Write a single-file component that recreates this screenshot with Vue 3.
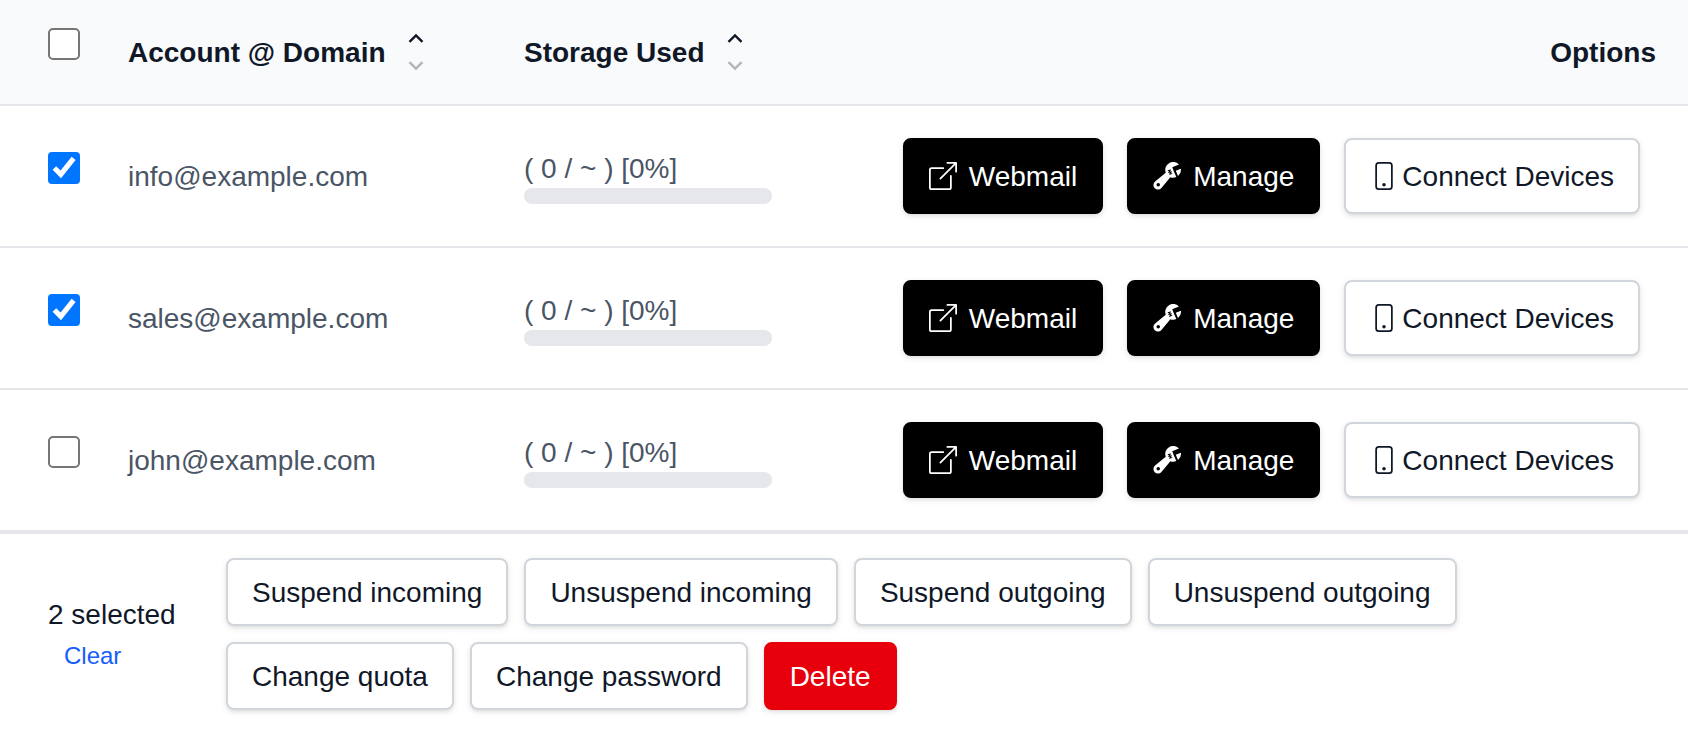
<script setup>
import { computed, ref } from 'vue'

const accounts = ref([
  { email: 'info@example.com', used: 0, quota: '~', percent: 0 },
  { email: 'sales@example.com', used: 0, quota: '~', percent: 0 },
  { email: 'john@example.com', used: 0, quota: '~', percent: 0 },
])

const bulkActions = [
  'Suspend incoming',
  'Unsuspend incoming',
  'Suspend outgoing',
  'Unsuspend outgoing',
  'Change quota',
  'Change password',
]

const columns = [
  { key: 'email', label: 'Account @ Domain' },
  { key: 'used', label: 'Storage Used' },
]

const selected = ref(['info@example.com', 'sales@example.com'])
const sortKey = ref('')
const sortDir = ref(1)

const allSelected = computed({
  get: () => accounts.value.length > 0 && selected.value.length === accounts.value.length,
  set: (on) => (selected.value = on ? accounts.value.map(a => a.email) : []),
})

const rows = computed(() => {
  const key = sortKey.value
  if (!key) return accounts.value
  return [...accounts.value].sort((a, b) => (a[key] > b[key] ? 1 : a[key] < b[key] ? -1 : 0) * sortDir.value)
})

function setSort(key) {
  if (sortKey.value === key) {
    sortDir.value = -sortDir.value
  } else {
    sortKey.value = key
    sortDir.value = 1
  }
}

function removeSelected() {
  accounts.value = accounts.value.filter(a => !selected.value.includes(a.email))
  selected.value = []
}
</script>

<template>
  <div class="accounts">
    <table class="table">
      <thead>
        <tr>
          <th class="col-check">
            <input v-model="allSelected" class="check" type="checkbox" aria-label="Select all accounts" />
          </th>
          <th v-for="c in columns" :key="c.key" :class="'col-' + c.key">
            <button class="sort" type="button" @click="setSort(c.key)">
              {{ c.label }}
              <span class="sort-icons">
                <svg viewBox="0 0 24 24"><path d="M5.5 14.9 12 8.4l6.5 6.5" /></svg>
                <svg class="dim" viewBox="0 0 24 24"><path d="M5.5 9.1 12 15.6l6.5-6.5" /></svg>
              </span>
            </button>
          </th>
          <th class="col-options">Options</th>
        </tr>
      </thead>
      <tbody>
        <tr v-for="a in rows" :key="a.email">
          <td class="col-check">
            <input v-model="selected" class="check" type="checkbox" :value="a.email" :aria-label="'Select ' + a.email" />
          </td>
          <td>{{ a.email }}</td>
          <td>
            <div class="usage">( {{ a.used }} / {{ a.quota }} ) [{{ a.percent }}%]</div>
            <div class="bar"><div class="bar-fill" :style="{ width: a.percent + '%' }"></div></div>
          </td>
          <td class="col-options">
            <div class="options">
              <a class="btn btn-dark" href="#webmail">
                <svg class="icon" viewBox="0 0 16 16">
                  <path d="M8.636 3.5a.5.5 0 0 0-.5-.5H1.5A1.5 1.5 0 0 0 0 4.5v10A1.5 1.5 0 0 0 1.5 16h10a1.5 1.5 0 0 0 1.5-1.5V7.864a.5.5 0 0 0-1 0V14.5a.5.5 0 0 1-.5.5h-10a.5.5 0 0 1-.5-.5v-10a.5.5 0 0 1 .5-.5h6.636a.5.5 0 0 0 .5-.5" />
                  <path d="M16 .5a.5.5 0 0 0-.5-.5h-5a.5.5 0 0 0 0 1h3.793L6.146 9.146a.5.5 0 1 0 .708.708L15 1.707V5.5a.5.5 0 0 0 1 0z" />
                </svg>
                Webmail
              </a>
              <button class="btn btn-dark" type="button">
                <svg class="icon" viewBox="0 0 16 16">
                  <path d="M16 4.5a4.5 4.5 0 0 1-1.703 3.526L13 5l2.959-1.11q.04.3.041.61" />
                  <path d="M11.5 9c.653 0 1.273-.139 1.833-.39L12 5.5 11 3l3.826-1.53A4.5 4.5 0 0 0 7.29 6.092l-6.116 5.096a2.583 2.583 0 1 0 3.638 3.638L9.908 8.71A4.5 4.5 0 0 0 11.5 9m-1.292-4.361-.596.893.809-.27a.25.25 0 0 1 .287.377l-.596.893.809-.27.158.475-1.5.5a.25.25 0 0 1-.287-.376l.596-.893-.809.27a.25.25 0 0 1-.287-.377l.596-.893-.809.27-.158-.475 1.5-.5a.25.25 0 0 1 .287.376M3 14a1 1 0 1 1 0-2 1 1 0 0 1 0 2" />
                </svg>
                Manage
              </button>
              <button class="btn btn-tight" type="button">
                <svg class="icon" viewBox="0 0 16 16">
                  <path d="M11 1a1 1 0 0 1 1 1v12a1 1 0 0 1-1 1H5a1 1 0 0 1-1-1V2a1 1 0 0 1 1-1zM5 0a2 2 0 0 0-2 2v12a2 2 0 0 0 2 2h6a2 2 0 0 0 2-2V2a2 2 0 0 0-2-2z" />
                  <path d="M8 14a1 1 0 1 0 0-2 1 1 0 0 0 0 2" />
                </svg>
                Connect Devices
              </button>
            </div>
          </td>
        </tr>
      </tbody>
    </table>

    <div class="bulk">
      <div class="bulk-info">
        <div>{{ selected.length }} selected</div>
        <button class="clear" type="button" @click="selected = []">Clear</button>
      </div>
      <div class="bulk-actions">
        <button v-for="label in bulkActions" :key="label" class="btn btn-small" type="button">{{ label }}</button>
        <button class="btn btn-small btn-danger" type="button" @click="removeSelected">Delete</button>
      </div>
    </div>
  </div>
</template>

<style>
body { margin:0; background:#fff }
</style>

<style scoped>
.accounts { font-family:"Liberation Sans", Arial, sans-serif; font-size:28px; line-height:41px; color:#101828 }
.accounts button { font:inherit; cursor:pointer }

.table { width:100%; border-collapse:separate; border-spacing:0 }
th, td { padding:32px 24px; border-bottom:2px solid #e5e7eb; text-align:left; vertical-align:middle; white-space:nowrap }
th { height:104px; padding-top:0; padding-bottom:0; background:#f9fafb; font-weight:700 }
td { color:#4a5565 }

th.col-check, td.col-check { box-sizing:border-box; width:104px; padding:0 24px 16px 48px }
.col-email { width:348px }
.col-used { width:248px }
th.col-options { padding-right:32px; text-align:right }
td.col-options { padding-right:48px }

/* drawn at twice the size so that the native border and tick scale too */
.check { display:block; width:16px; height:16px; margin:0; zoom:2 }

.sort { display:flex; align-items:center; gap:18px; padding:0; border:0; background:none; color:inherit }
.sort-icons { display:flex; flex-direction:column; gap:2px }
.sort-icons svg { display:block; width:24px; height:24px; fill:none; stroke:currentColor; stroke-width:2.3 }
.sort-icons .dim { opacity:.3 }

.usage { height:40px }
.bar { width:248px; height:16px; border-radius:8px; background:#e5e7eb; overflow:hidden }
.bar-fill { height:100%; background:#155dfc }

.options { display:flex; justify-content:flex-end; gap:24px }
.btn {
  display:inline-flex; align-items:center; gap:12px; padding:16px 24px 15px; border:2px solid #d1d5dc; border-radius:8px;
  background:#fff; color:#101828; text-decoration:none; white-space:nowrap;
  box-shadow:0 2px 6px rgba(0,0,0,.1), 0 2px 4px -2px rgba(0,0,0,.1);
}
.btn-dark { border-color:#000; background:#000; color:#fff }
.btn-tight { gap:4px }
.btn-small { padding:12px 24px 11px }
.btn-danger { border-color:#e7000b; background:#e7000b; color:#fff }
.icon { width:28px; height:28px; margin-bottom:1px; fill:currentColor; flex:none }

.bulk { display:flex; align-items:center; gap:50px; padding:24px 48px; border-top:2px solid #e5e7eb }
.bulk-info { flex:none; min-width:128px; padding-top:2px }
.bulk-actions { display:flex; flex-wrap:wrap; gap:16px }
.accounts .clear { display:block; padding:0 16px; border:0; background:none; color:#155dfc; font-size:24px; line-height:41px }
</style>
